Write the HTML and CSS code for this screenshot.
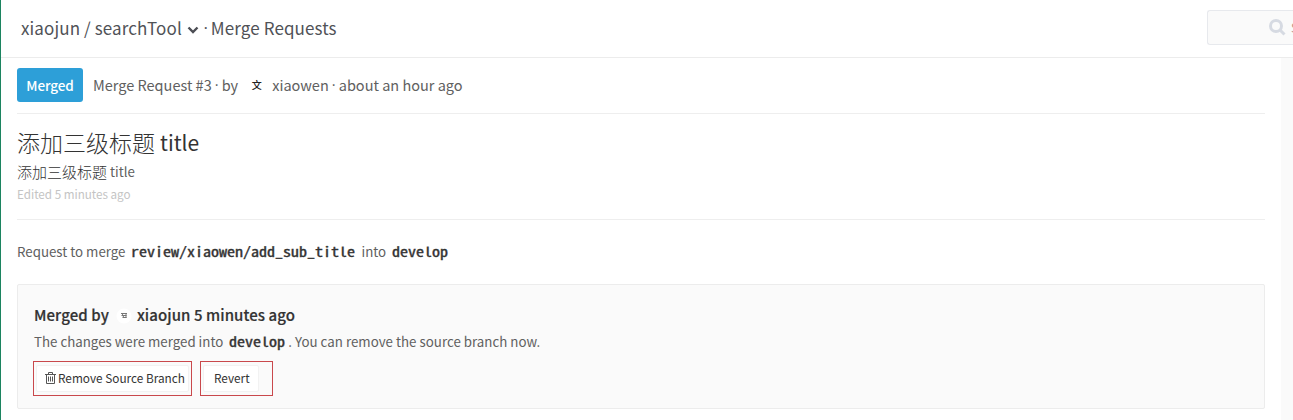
FILE: index.html
```html
<!DOCTYPE html>
<html lang="zh">
<head>
<meta charset="utf-8">
<title>Merge Request #3</title>
<link rel="stylesheet" href="styles.css">
</head>
<body>
<div class="app">
  <header class="topbar">
    <h1 class="crumbs"><span>xiaojun / searchTool</span><svg class="chevron" viewBox="0 0 12 8"><path d="M1.500 1.500 6 6l4.500-4.500" /></svg><span class="dot">·</span><span>Merge Requests</span></h1>
    <div class="search"><svg class="lens" viewBox="0 0 17 17"><circle cx="7" cy="7" r="5.500"/><path d="m11 11 4.500 4.500"/></svg><span class="search-text">Search</span></div>
  </header>
  <div class="page">
    <main class="content">
      <div class="meta">
        <span class="badge">Merged</span>
        <span class="meta-id">Merge Request #3</span><span class="dot">·</span><span>by</span>
        <span class="avatar">文</span>
        <span>xiaowen</span><span class="dot">·</span><span>about an hour ago</span>
      </div>
      <section class="detail">
        <h2 class="title"><span class="title-cjk">添加三级标题</span><span>title</span></h2>
        <p class="desc"><span class="desc-cjk">添加三级标题</span><span>title</span></p>
        <p class="edited">Edited 5 minutes ago</p>
      </section>
      <p class="branches"><span>Request to merge</span><code class="code-source"><span>review/xiaowen/add_sub_title</span></code><span>into</span><code><span>develop</span></code></p>
      <section class="panel">
        <h3 class="merged-by"><span>Merged by</span><svg class="mini-avatar" viewBox="0 0 16 16"><circle cx="8" cy="8" r="7.500"/><path d="M5 5.500h6M5.500 7.500h5M6.500 9.500h4M6 5l1.500 4M10 5v5"/></svg><span>xiaojun 5 minutes ago</span></h3>
        <p class="note"><span>The changes were merged into</span><code><span>develop</span></code><span class="note-b">. You can remove the source branch now.</span></p>
        <div class="actions">
          <div class="mark mark-remove"><button class="btn btn-remove"><svg class="trash" viewBox="0 0 11 12"><path d="M0 2.500h11M3.500 2.500v-2h4v2M1.500 2.500v9h8v-9M3.500 4.500v5M5.500 4.500v5M7.500 4.500v5"/></svg><span>Remove Source Branch</span></button></div>
          <div class="mark mark-revert"><button class="btn btn-revert"><span>Revert</span></button></div>
        </div>
      </section>
    </main>
  </div>
</div>
</body>
</html>
```
FILE: styles.css
```css
* { box-sizing: border-box; }
body { margin: 0; background: #fff; color: #606060; font-family: "Noto Sans CJK SC", sans-serif; }
h1, h2, h3, p { margin: 0; font-weight: 400; }
.app { height: 420px; overflow: hidden; border-left: 1px solid #1c8460; display: flex; flex-direction: column; white-space: nowrap; }
.topbar { height: 58px; flex: none; border-bottom: 1px solid #ececec; display: flex; justify-content: space-between; padding: 10px 0 0 20px; overflow: hidden; }
.crumbs { height: 35px; display: flex; align-items: center; font-size: 17px; letter-spacing: 0.11px; color: #505257; }
.chevron { width: 12px; height: 8px; margin: 4px 2px 0 5px; fill: none; stroke: #4c4e54; stroke-width: 2.4; }
.dot { width: 10px; flex: none; text-align: center; font-family: "Open Sans", sans-serif; }
.search { width: 86px; height: 35px; background: #fafafa; border: 1px solid #e7e9ed; border-right: 0; border-radius: 3px 0 0 3px; display: flex; align-items: center; padding-left: 61px; overflow: hidden; }
.lens { width: 17px; height: 17px; flex: none; fill: none; stroke: #d6dae2; stroke-width: 3; }
.search-text { margin-left: 5px; font-size: 13px; color: #b9908c; }
.page { flex: 1; background: #fafafa; padding-right: 12px; }
.content { height: 100%; background: #fff; padding: 0 16px; }
.meta { height: 56px; border-bottom: 1px solid #eee; padding-top: 10px; display: flex; align-items: flex-start; line-height: 34px; font-size: 14.500px; }
.badge { width: 66px; height: 34px; border-radius: 3px; background: #2d9fd8; color: #fff; font-size: 13.500px; font-weight: 500; letter-spacing: -0.1px; text-align: center; }
.meta-id { margin-left: 10px; }
.avatar { width: 34px; padding-left: 3px; text-align: center; font-size: 10px; font-weight: 500; color: #222; }
.detail { height: 106px; border-bottom: 1px solid #eee; padding-top: 12px; }
.title { height: 32px; line-height: 32px; display: flex; align-items: center; font-size: 21px; color: #333; }
.title-cjk { font-size: 23px; font-weight: 300; margin-right: 5px; }
.desc { height: 26px; line-height: 27px; display: flex; font-size: 13.300px; }
.desc-cjk { font-size: 15px; font-weight: 300; color: #333; margin-right: 3px; }
.edited { line-height: 19px; font-size: 11.650px; color: #c4c4c4; }
.branches { height: 64px; line-height: 64px; display: flex; font-size: 13.300px; }
code { width: 56px; margin: 0 6px; font-family: "Noto Sans Mono CJK SC", monospace; font-size: 13.300px; font-weight: 400; -webkit-text-stroke: 0.35px #333; color: #333; }
code span { display: inline-block; transform: scaleX(1.203); transform-origin: left; }
.code-source { width: 224px; }
.panel { height: 125px; background: #fafafa; border: 1px solid #ececec; border-radius: 2px; padding: 17px 16px 0; }
.merged-by { height: 26px; display: flex; align-items: center; font-size: 15px; font-weight: 500; letter-spacing: 0.08px; -webkit-text-stroke: 0.2px #333; color: #333; line-height: 26px; }
.mini-avatar { width: 16px; height: 16px; flex: none; margin: 2px 5px 0 7px; fill: #fff; -webkit-text-stroke: 0; }
.mini-avatar path { fill: none; stroke: #777; }
.note { height: 28px; line-height: 28px; display: flex; font-size: 13.300px; }
.note-b { margin-left: -3px; letter-spacing: 0.02px; }
.actions { display: flex; gap: 8px; margin: 5px 0 0 -1px; }
.mark { height: 35px; border: 1px solid #c9484c; padding: 3px 2px; }
.mark-remove { width: 159px; }
.mark-revert { width: 73px; }
.btn { height: 27px; border: 1px solid #f2f2f2; border-radius: 2px; background: #fff; color: #333; font-family: inherit; font-size: 11.800px; line-height: 22px; padding: 0 0 2px; display: flex; align-items: center; }
.btn-remove { width: 153px; padding-left: 8px; }
.btn-revert { width: 56px; padding-left: 10px; }
.trash { width: 11px; height: 12px; margin-right: 2px; fill: none; stroke: #555; stroke-width: 1; }
```
